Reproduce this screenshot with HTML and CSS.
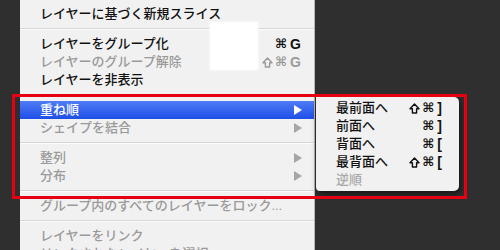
FILE: index.html
```html
<!DOCTYPE html>
<html lang="ja">
<head>
    <meta charset="UTF-8">
    <title>レイヤーメニュー</title>
    <link rel="stylesheet" href="styles.css">
</head>
<body>
    <div class="menu">
        <div class="item">レイヤーに基づく新規スライス</div>
        <div class="sep"></div>
        <div class="item">レイヤーをグループ化<span class="key"><span class="sym">⌘</span>G</span></div>
        <div class="item off">レイヤーのグループ解除<span class="key"><svg class="shift" viewBox="0 0 11 11"><path d="M5.5 1 L10 5.8 H7.6 V10 H3.4 V5.8 H1 Z"/></svg><span class="sym">⌘</span>G</span></div>
        <div class="item">レイヤーを非表示</div>
        <div class="sep"></div>
        <div class="item active">重ね順<span class="arrow"></span></div>
        <div class="item off">シェイプを結合<span class="arrow"></span></div>
        <div class="sep"></div>
        <div class="item off">整列<span class="arrow"></span></div>
        <div class="item off">分布<span class="arrow"></span></div>
        <div class="sep"></div>
        <div class="item off">グループ内のすべてのレイヤーをロック...</div>
        <div class="sep"></div>
        <div class="item off">レイヤーをリンク</div>
        <div class="item off">リンクされたレイヤーを選択</div>
    </div>

    <div class="glare"></div>

    <div class="submenu">
        <div class="item">最前面へ<span class="key"><svg class="shift" viewBox="0 0 11 11"><path d="M5.5 1 L10 5.8 H7.6 V10 H3.4 V5.8 H1 Z"/></svg><span class="sym">⌘</span>]</span></div>
        <div class="item">前面へ<span class="key"><span class="sym">⌘</span>]</span></div>
        <div class="item">背面へ<span class="key"><span class="sym">⌘</span>[</span></div>
        <div class="item">最背面へ<span class="key"><svg class="shift" viewBox="0 0 11 11"><path d="M5.5 1 L10 5.8 H7.6 V10 H3.4 V5.8 H1 Z"/></svg><span class="sym">⌘</span>[</span></div>
        <div class="item off">逆順</div>
    </div>

    <div class="mark"></div>
</body>
</html>
```

FILE: styles.css
```css
body {
    margin: 0;
    background-color: #2f2f2f;
    font-family: 'Liberation Sans', 'Noto Sans CJK JP', sans-serif;
    font-size: 13px;
    font-weight: 500;
    color: #111;
    height: 250px;
    overflow: hidden;
    position: relative;
}

.menu {
    margin-left: 20px;
    width: 295px;
    padding-top: 5px;
    background-color: #f1f1f1;
    border-right: 1px solid #b8b8b8;
    box-sizing: border-box;
}

.item {
    display: flex;
    justify-content: space-between;
    align-items: center;
    height: 18px;
    line-height: 18px;
    padding: 0 13px 0 20px;
    white-space: nowrap;
}

.item.off {
    color: #9a9a9a;
}

.item.active {
    background: linear-gradient(#4f7cf5, #1f4ee8);
    color: #fff;
}

.sep {
    height: 12px;
    position: relative;
}

.sep::before {
    content: '';
    position: absolute;
    left: 0;
    right: 0;
    top: 5px;
    height: 1px;
    background-color: #d6d6d6;
    border-bottom: 1px solid #fbfbfb;
}

.key {
    display: flex;
    align-items: center;
    gap: 1px;
    font-size: 14px;
    font-weight: bold;
}

.sym {
    font-family: 'DejaVu Sans', sans-serif;
    font-size: 13px;
    font-weight: bold;
    margin-right: 2px;
}

.shift {
    width: 11px;
    height: 11px;
    margin-right: 1px;
    fill: none;
    stroke: currentColor;
    stroke-width: 1.4;
    stroke-linejoin: round;
}

.arrow {
    width: 0;
    height: 0;
    margin-right: -1px;
    border-left: 8px solid #a6a6a6;
    border-top: 5px solid transparent;
    border-bottom: 5px solid transparent;
}

.active .arrow {
    border-left-color: #fff;
}

.submenu {
    position: absolute;
    left: 316px;
    top: 97px;
    width: 143px;
    padding: 2px 0;
    background-color: #f1f1f1;
    border-radius: 0 5px 5px 4px;
    box-shadow: 2px 3px 6px rgba(0, 0, 0, 0.55);
}

.submenu .item {
    padding: 0 17px 0 20px;
}

.submenu .item.off {
    color: #a9a9a9;
}

.glare {
    position: absolute;
    left: 210px;
    top: 22px;
    width: 48px;
    height: 48px;
    background-color: #fff;
    box-shadow: 0 0 3px #fff;
}

.mark {
    position: absolute;
    left: 12px;
    top: 94px;
    width: 455px;
    height: 105px;
    border: 3px solid #e60012;
    box-sizing: border-box;
}
```
